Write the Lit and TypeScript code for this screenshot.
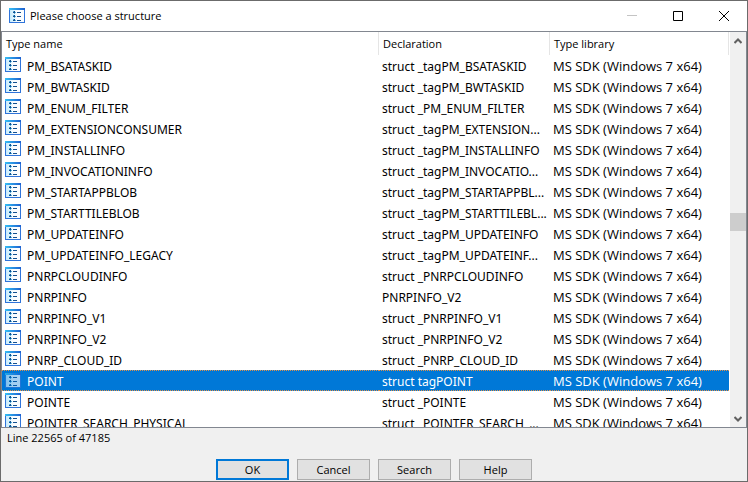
import { LitElement, html, css } from "lit";
import { customElement, state } from "lit/decorators.js";

interface TypeRow {
  name: string;
  decl: string;
}

const LIBRARY = "MS SDK (Windows 7 x64)";

const ROWS: TypeRow[] = [
  { name: "PM_BSATASKID", decl: "struct _tagPM_BSATASKID" },
  { name: "PM_BWTASKID", decl: "struct _tagPM_BWTASKID" },
  { name: "PM_ENUM_FILTER", decl: "struct _PM_ENUM_FILTER" },
  { name: "PM_EXTENSIONCONSUMER", decl: "struct _tagPM_EXTENSION..." },
  { name: "PM_INSTALLINFO", decl: "struct _tagPM_INSTALLINFO" },
  { name: "PM_INVOCATIONINFO", decl: "struct _tagPM_INVOCATIO..." },
  { name: "PM_STARTAPPBLOB", decl: "struct _tagPM_STARTAPPBL..." },
  { name: "PM_STARTTILEBLOB", decl: "struct _tagPM_STARTTILEBL..." },
  { name: "PM_UPDATEINFO", decl: "struct _tagPM_UPDATEINFO" },
  { name: "PM_UPDATEINFO_LEGACY", decl: "struct _tagPM_UPDATEINF..." },
  { name: "PNRPCLOUDINFO", decl: "struct _PNRPCLOUDINFO" },
  { name: "PNRPINFO", decl: "PNRPINFO_V2" },
  { name: "PNRPINFO_V1", decl: "struct _PNRPINFO_V1" },
  { name: "PNRPINFO_V2", decl: "struct _PNRPINFO_V2" },
  { name: "PNRP_CLOUD_ID", decl: "struct _PNRP_CLOUD_ID" },
  { name: "POINT", decl: "struct tagPOINT" },
  { name: "POINTE", decl: "struct _POINTE" },
  { name: "POINTER_SEARCH_PHYSICAL", decl: "struct _POINTER_SEARCH_..." },
];

const structIcon = () => html`
  <svg class="icon" width="16" height="16" viewBox="0 0 16 16" shape-rendering="crispEdges" aria-hidden="true">
    <defs>
      <linearGradient id="bar" x1="0" x2="1"><stop offset="0" stop-color="#35c0f5"/><stop offset="1" stop-color="#1c5fd0"/></linearGradient>
      <linearGradient id="pane" x1="0" x2="1"><stop offset="0" stop-color="#c4ebfc"/><stop offset=".5" stop-color="#fbfdff"/></linearGradient>
    </defs>
    <rect x="0" y="0" width="16" height="15" fill="#2f74da"/>
    <rect x="0" y="0" width="16" height="2" fill="url(#bar)"/>
    <rect x="1" y="2" width="14" height="12" fill="url(#pane)"/>
    <path fill="#12508f" d="M5 3h1v1h-1zM4 4h2v1h-2zM5 7h1v1h-1zM4 8h2v1h-2zM5 11h1v1h-1zM4 12h2v1h-2zM8 4h4v1h-4zM8 8h4v1h-4zM8 12h4v1h-4z"/>
    <path fill="#4fb0e0" d="M4 3h1v1h-1zM6 4h1v1h-1zM5 5h1v1h-1zM4 7h1v1h-1zM6 8h1v1h-1zM5 9h1v1h-1zM4 11h1v1h-1zM6 12h1v1h-1z"/>
  </svg>`;

@customElement("app-root")
export class AppRoot extends LitElement {
  @state() private selected = 15;

  static styles = css`
    :host {
      display: block;
      height: 100vh;
      font: 11px/16px "Open Sans", sans-serif;
      color: #000;
    }
    * { box-sizing: border-box; }
    .window {
      height: 100%;
      display: flex;
      flex-direction: column;
      border: 1px solid #6b6b6b;
      background: #f0f0f0;
    }
    .titlebar {
      height: 30px;
      flex: none;
      display: flex;
      align-items: center;
      background: #fff;
      padding-left: 8px;
    }
    .title { flex: 1; margin: 0; padding-left: 5px; font: inherit; }
    .caption { width: 46px; height: 28px; padding: 0; border: 0; background: none; display: grid; place-items: center; }
    .list {
      flex: 1;
      min-height: 0;
      display: flex;
      background: #fff;
      border: 1px solid #828790;
    }
    .view { flex: 1; min-width: 0; overflow: hidden; }
    table { width: 100%; table-layout: fixed; border-collapse: separate; border-spacing: 0; }
    .c2 { width: 171px; }
    .c3 { width: 179px; }
    th { height: 23px; padding: 0 4px; text-align: left; font-weight: 400; border-right: 1px solid #e5e5e5; }
    td {
      height: 21px;
      padding: 2px 3px 0;
      font-family: "Noto Sans", sans-serif;
      font-size: 12px;
      line-height: 19px;
      white-space: nowrap;
    }
    .library { font-family: "Open Sans", sans-serif; font-size: 13px; }
    .name { display: flex; align-items: flex-start; gap: 6px; }
    .icon { display: block; flex: none; }
    .selected td {
      background: #0078d7;
      color: #fff;
      border: 0 dotted #e0914a;
      border-width: 1px 0;
      line-height: 17px;
    }
    .selected .icon { opacity: 0.65; }
    .scrollbar {
      width: 17px;
      flex: none;
      display: flex;
      flex-direction: column;
      background: #f0f0f0;
      border-left: 1px solid #fff;
    }
    .arrow { height: 17px; flex: none; padding: 0; border: 0; background: none; display: grid; place-items: center; }
    .track { flex: 1; display: flex; flex-direction: column; }
    .before { flex: 164; }
    .thumb { flex: 18; background: #cdcdcd; }
    .after { flex: 180; }
    .status { padding: 2px 6px 3px; flex: none; }
    .buttons { display: flex; justify-content: center; gap: 8px; padding: 10px 0 1px; flex: none; }
    .button {
      width: 73px;
      height: 21px;
      padding: 0;
      font: inherit;
      color: #000;
      background: #e1e1e1;
      border: 1px solid #adadad;
    }
    .default { border: 2px solid #0078d7; }
  `;

  render() {
    return html`
      <div class="window">
        <header class="titlebar">
          ${structIcon()}
          <h1 class="title">Please choose a structure</h1>
          <button class="caption" aria-label="Minimize" disabled>
            <svg width="10" height="10" viewBox="0 0 10 10"><path d="M0 4.5H10" stroke="#c4c4c4"/></svg>
          </button>
          <button class="caption" aria-label="Maximize">
            <svg width="10" height="10" viewBox="0 0 10 10"><path d="M.5.5h9v9h-9z" fill="none" stroke="#000"/></svg>
          </button>
          <button class="caption" aria-label="Close">
            <svg width="10" height="10" viewBox="0 0 10 10"><path d="M0 0L10 10M10 0L0 10" stroke="#000"/></svg>
          </button>
        </header>
        <main class="list">
          <div class="view">
            <table>
              <colgroup><col /><col class="c2" /><col class="c3" /></colgroup>
              <thead>
                <tr><th scope="col">Type name</th><th scope="col">Declaration</th><th scope="col">Type library</th></tr>
              </thead>
              <tbody>
                ${ROWS.map(
                  (row, i) => html`<tr class=${i === this.selected ? "selected" : ""} @click=${() => (this.selected = i)}>
                    <td><div class="name">${structIcon()}<span>${row.name}</span></div></td>
                    <td>${row.decl}</td>
                    <td class="library">${LIBRARY}</td>
                  </tr>`
                )}
              </tbody>
            </table>
          </div>
          <div class="scrollbar">
            <button class="arrow" aria-label="Scroll up">
              <svg width="8" height="6" viewBox="0 0 8 6"><path d="M.5 5L4 1.5L7.5 5" fill="none" stroke="#606060" stroke-width="2"/></svg>
            </button>
            <div class="track"><div class="before"></div><div class="thumb"></div><div class="after"></div></div>
            <button class="arrow" aria-label="Scroll down">
              <svg width="8" height="6" viewBox="0 0 8 6"><path d="M.5 1L4 4.5L7.5 1" fill="none" stroke="#606060" stroke-width="2"/></svg>
            </button>
          </div>
        </main>
        <div class="status">Line 22565 of 47185</div>
        <footer class="buttons">
          <button class="button default">OK</button>
          <button class="button">Cancel</button>
          <button class="button">Search</button>
          <button class="button">Help</button>
        </footer>
      </div>
    `;
  }
}
